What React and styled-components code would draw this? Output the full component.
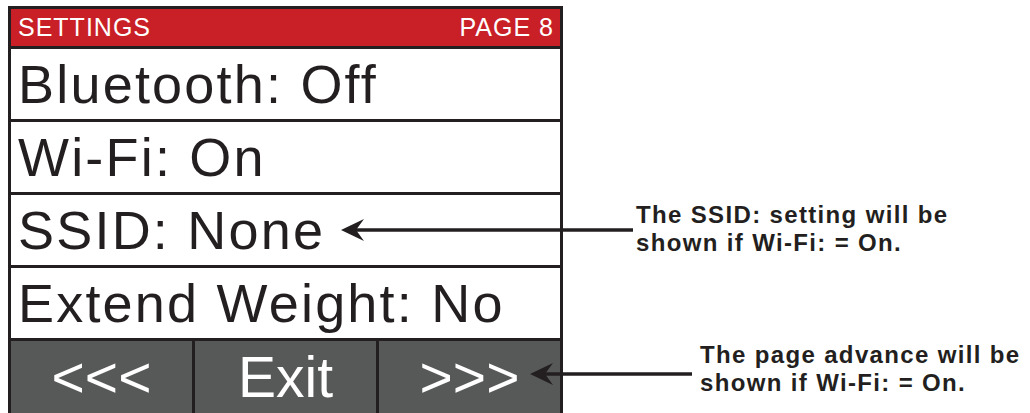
import React from 'react';
import styled, { createGlobalStyle } from 'styled-components';

const GlobalStyle = createGlobalStyle`
    html, body {
        margin: 0;
        padding: 0;
        background: #ffffff;
        overflow: hidden;
    }
    body {
        font-family: "Liberation Sans", Arial, sans-serif;
    }
`;

const settings = ['Bluetooth: Off', 'Wi-Fi: On', 'SSID: None', 'Extend Weight: No'];

const App = () => {
    return <>
        <GlobalStyle />
        <StyledPage>
            <StyledScreen>
                <StyledHeader>
                    <span>SETTINGS</span>
                    <span>PAGE 8</span>
                </StyledHeader>
                {settings.map((s) => <StyledRow key={s}>{s}</StyledRow>)}
                <StyledFooter>
                    <StyledKey>&lt;&lt;&lt;</StyledKey>
                    <StyledKey>Exit</StyledKey>
                    <StyledKey>&gt;&gt;&gt;</StyledKey>
                </StyledFooter>
            </StyledScreen>
            <StyledNotes>
                <StyledNote $indent={0} $top={195}>
                    The SSID: setting will be<br />shown if Wi-Fi: = On.
                </StyledNote>
                <StyledNote $indent={64} $top={84}>
                    The page advance will be<br />shown if Wi-Fi: = On.
                </StyledNote>
            </StyledNotes>
            <StyledArrows width="1030" height="413" viewBox="0 0 1030 413">
                <line x1="354" y1="230" x2="633" y2="230" stroke="#231f20" strokeWidth="3.5" />
                <path d="M341 230 L364 219 L356 230 L364 241 Z" fill="#231f20" />
                <line x1="543" y1="374" x2="692" y2="374" stroke="#231f20" strokeWidth="3.5" />
                <path d="M530 374 L553 363 L545 374 L553 385 Z" fill="#231f20" />
            </StyledArrows>
        </StyledPage>
    </>;
};

const StyledPage = styled.div`
    position: relative;
    display: flex;
    align-items: flex-start;
    width: 1030px;
    height: 413px;
    padding: 6px 0 0 8px;
    box-sizing: border-box;
`;

const StyledScreen = styled.div`
    width: 555px;
    box-sizing: border-box;
    flex-shrink: 0;
    border: 3px solid #231f20;
    background: #231f20;
    display: flex;
    flex-direction: column;
    gap: 3px;
`;

const StyledHeader = styled.div`
    height: 37px;
    background: #c91f27;
    color: #ffffff;
    display: flex;
    justify-content: space-between;
    align-items: center;
    padding: 0 6px 0 7px;
    font-size: 25px;
    letter-spacing: 1px;
    line-height: 1;
`;

const StyledRow = styled.div`
    height: 70px;
    background: #ffffff;
    color: #231f20;
    display: flex;
    align-items: center;
    padding-left: 7px;
    font-size: 54px;
    letter-spacing: 2.2px;
    line-height: 1;
    white-space: nowrap;
`;

const StyledFooter = styled.div`
    height: 72px;
    display: grid;
    grid-template-columns: repeat(3, 1fr);
    gap: 3px;
`;

const StyledKey = styled.div`
    background: #575958;
    color: #ffffff;
    display: flex;
    justify-content: center;
    align-items: center;
    font-size: 57px;
    line-height: 1;
`;

const StyledNotes = styled.div`
    display: flex;
    flex-direction: column;
    margin-left: 73px;
`;

const StyledNote = styled.div`
    margin-left: ${(p) => p.$indent}px;
    margin-top: ${(p) => p.$top}px;
    font-size: 24px;
    font-weight: bold;
    line-height: 28px;
    letter-spacing: 1.35px;
    color: #231f20;
    white-space: nowrap;
`;

const StyledArrows = styled.svg`
    position: absolute;
    left: 0;
    top: 0;
    pointer-events: none;
`;

export default App;
